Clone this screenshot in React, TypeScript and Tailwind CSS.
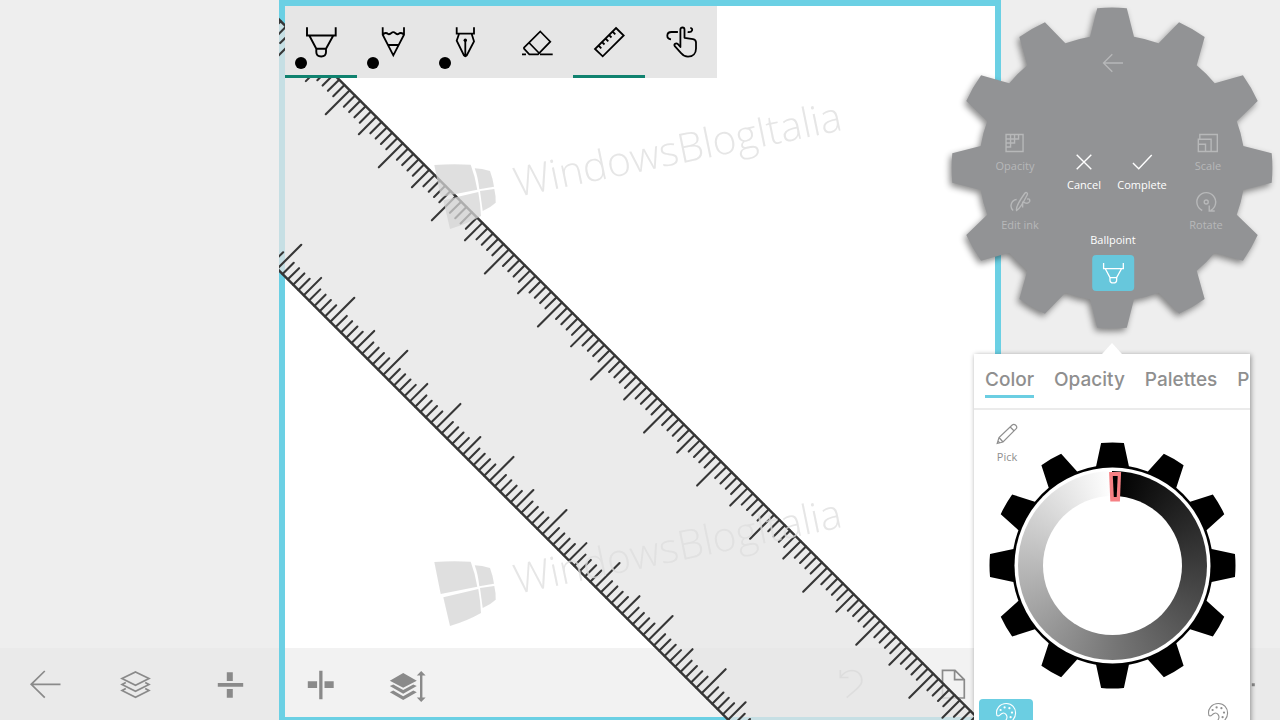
import React from 'react';

const TEETH = Array.from({ length: 12 }, (_, i) => i * 30);

// 12-tooth gear centred on 0,0
const gearPath = (outer: number, base: number, outerHalf: number, baseHalf: number) => {
  const point = (x: number, y: number, deg: number) => {
    const a = (deg * Math.PI) / 180;
    const px = x * Math.cos(a) - y * Math.sin(a);
    const py = x * Math.sin(a) + y * Math.cos(a);
    return `${px.toFixed(2)} ${py.toFixed(2)}`;
  };
  const oy = -Math.sqrt(outer * outer - outerHalf * outerHalf);
  const by = -Math.sqrt(base * base - baseHalf * baseHalf);
  const parts = TEETH.map((deg, i) => {
    const start = i === 0 ? `M${point(-baseHalf, by, deg)}` : `A${base} ${base} 0 0 1 ${point(-baseHalf, by, deg)}`;
    return `${start}L${point(-outerHalf, oy, deg)}A${outer} ${outer} 0 0 1 ${point(outerHalf, oy, deg)}L${point(baseHalf, by, deg)}`;
  });
  return `${parts.join('')}A${base} ${base} 0 0 1 ${point(-baseHalf, by, 0)}Z`;
};

const BallpointIcon = ({ className }: { className: string }) => (
  <svg viewBox="0 0 32 32" className={className} fill="none" stroke="currentColor" strokeWidth="1.9">
    <path d="M2 1.3V9.5H30.7V1.3M4.3 9.5L11.3 22.7H21L28.3 9.5M11.3 22.7V26C11.3 29 13.5 30.5 16.2 30.5S21 29 21 26V22.7" />
  </svg>
);

const PencilIcon = () => (
  <svg viewBox="0 0 32 32" className="size-8" fill="none" stroke="currentColor" strokeWidth="1.8">
    <path d="M5.7 1.3V8.7L16.3 29.3L27 8.7V1.3M5.7 8.7C7.5 6.5 9.5 6.5 11.3 8.2C13.5 8.7 14.3 6.2 16.3 6.2S19 8.7 21.2 8.2C23 6.5 25 6.5 27 8.7M11.3 19H21.3" />
  </svg>
);

const FountainPenIcon = () => (
  <svg viewBox="0 0 32 32" className="size-8" fill="none" stroke="currentColor" strokeWidth="1.8">
    <path d="M7.7 1.3V7.6H25V1.3M10 8L7.7 14.7L15 29.5Q16.3 31 17.7 29.5L25 15.3L22.7 8M16.3 15V30" />
    <circle cx="16.3" cy="14.3" r="1.7" fill="currentColor" stroke="none" />
  </svg>
);

const EraserIcon = () => (
  <svg viewBox="0 0 32 32" className="size-8" fill="none" stroke="currentColor" strokeWidth="1.7">
    <path d="M19.3 5.5L29.3 15.7L17 28.3H8.3L3 22.7V21.7ZM8.3 17L18 27M1 28.3H5M19 28.3H31.7" />
  </svg>
);

const RulerIcon = () => (
  <svg viewBox="0 0 32 32" className="size-8" fill="none" stroke="currentColor" strokeWidth="1.8">
    <path d="M23 2L30.7 9.5L9.7 30.3L2 23ZM5.5 19.5L8.3 22.3M9 16L11.5 18.5M12.5 12.5L15.3 15.3M16 9L18.5 11.5M19.5 5.5L22.3 8.3" />
  </svg>
);

const TouchIcon = () => (
  <svg viewBox="0 0 32 32" className="size-8" fill="none" stroke="currentColor" strokeWidth="1.8" strokeLinejoin="round">
    <path d="M15.4 21V3.5C15.4 .8 19.5 .8 19.5 3.5V11.8L28 13.2C30 13.6 31 14.5 31 16.5V22.5C31 27.5 28 30.7 23 30.7C20 30.7 18 29.5 16.3 27.3L9.8 20.2C8.5 18.2 11 16.4 12.8 18Z" />
    <path d="M12.9 6H6.5C1 6 1 12.8 6 13.3M22.7 6C27.7 6.8 28.5 2.2 25.3 1.8" />
  </svg>
);

const PaletteIcon = () => (
  <svg viewBox="0 0 20 20" className="size-5 overflow-visible" fill="none" stroke="currentColor" strokeWidth="1.1">
    <path d="M1 12.6C-1 6 4 .5 10.5 .5C16 .5 19.6 4.8 19.6 10C19.6 15.4 15.4 19.5 11.6 19.5C9.4 19.5 9.6 17.6 10.6 15.8C12 12.5 9 8.9 6 10.4C3.8 11.5 3.2 13.8 1 12.6Z" />
    <g fill="currentColor" stroke="none">
      <circle cx="4.6" cy="7" r="1.1" />
      <circle cx="8.6" cy="4.4" r="1.1" />
      <circle cx="13.4" cy="5.2" r="1.1" />
      <circle cx="16" cy="9.6" r="1.1" />
      <circle cx="14.6" cy="14.2" r="1.1" />
    </g>
  </svg>
);

const Watermark = ({ className }: { className: string }) => (
  <div className={`pointer-events-none absolute opacity-75 ${className}`}>
    <svg viewBox="0 0 420 76" className="h-[76px] w-[420px] overflow-visible">
      <g fill="#d5d5d5">
        <path d="M.3 2Q18 .6 36.7 1.7Q41 13 43.3 26.7L6.7 34Z" />
        <path d="M40.7 5.3Q48 5.6 56 8Q59 16 60 23.7L45.3 26.3Q44 14 40.7 5.3Z" />
        <path d="M46 28L60.3 26Q62 33 61.7 39.7Q56 45 48.7 48Z" />
        <path d="M9.3 37.3L44.3 29Q46.5 41 47 53Q33 61 16 66Z" />
      </g>
      <text x="83" y="34" transform="rotate(-11.6 83 34)" fill="#dedede" className="font-['Open_Sans',sans-serif] text-[41px] font-light">WindowsBlogItalia</text>
    </svg>
  </div>
);

// both scales repeat every ten marks: long, four short, middle, four short
const STEP = 10.61;
const tickLength = (i: number) => (i % 10 === 0 ? 24 : i % 5 === 0 ? 17.4 : 11.2);

const StencilRuler = () => (
  <svg className="pointer-events-none absolute inset-0 size-full" stroke="#363636" strokeWidth="2.1" strokeLinecap="round">
    <path d="M-40 -20.5L1000 1019.5L1000 1270.5L-40 230.5Z" fill="#e4e4e4" fillOpacity="0.75" stroke="none" />
    <path d="M-40 -20.5L1000 1019.5M-40 230.5L1000 1270.5" strokeWidth="2.4" />
    {Array.from({ length: 180 }, (_, n) => {
      const i = n - 50;
      const x = (440 - 279 - 19.5 + i * STEP) / 2;
      const y = x + 19.5;
      return <line key={i} x1={x} y1={y} x2={x - tickLength(Math.abs(i))} y2={y + tickLength(Math.abs(i))} />;
    })}
    {Array.from({ length: 180 }, (_, n) => {
      const i = n - 50;
      const x = (546 - 279 - 270.5 + i * STEP) / 2;
      const y = x + 270.5;
      return <line key={i} x1={x} y1={y} x2={x + tickLength(Math.abs(i))} y2={y - tickLength(Math.abs(i))} />;
    })}
  </svg>
);

const INK_TOOLS = [
  { name: 'Ballpoint pen', icon: <BallpointIcon className="size-8" />, dot: true, active: true },
  { name: 'Pencil', icon: <PencilIcon />, dot: true, active: false },
  { name: 'Calligraphy pen', icon: <FountainPenIcon />, dot: true, active: false },
  { name: 'Eraser', icon: <EraserIcon />, dot: false, active: false },
  { name: 'Ruler', icon: <RulerIcon />, dot: false, active: true },
  { name: 'Touch writing', icon: <TouchIcon />, dot: false, active: false },
];

const InkToolbar = () => (
  <div className="relative flex w-fit bg-[#e6e6e6] text-black">
    {INK_TOOLS.map(tool => (
      <button key={tool.name} aria-label={tool.name} className={`relative flex size-[72px] items-center justify-center border-y-[3px] border-t-transparent ${tool.active ? 'border-b-[#10826f]' : 'border-b-transparent'}`}>
        {tool.icon}
        {tool.dot && <span className="absolute bottom-1.5 left-2.5 size-3 rounded-full bg-black" />}
      </button>
    ))}
  </div>
);

const BarButton = ({ label, className = 'w-[91px]', children }: { label: string; className?: string; children: React.ReactNode }) => (
  <button aria-label={label} className={`flex h-full items-center justify-center ${className}`}>
    <svg viewBox="0 0 40 40" className="size-10 overflow-visible" fill="none" stroke="currentColor" strokeWidth="1.7">
      {children}
    </svg>
  </button>
);

const BottomBar = () => (
  <nav className="flex h-[72px] self-end bg-[#e6e6e6]/50 text-[#8a8a8a] [grid-area:1/1]">
    <BarButton label="Back">
      <path d="M18.8 7L5.2 20.3L18.8 33.7M5.2 20.3H34.5" />
    </BarButton>
    <BarButton label="Layers">
      <path d="M18.5 8L32 14.5L18.5 21.2L5 14.5ZM8.8 18.4L5 20.5L18.5 27.2L32 20.5L28.2 18.4M8.8 24.4L5 26.5L18.5 33.2L32 26.5L28.2 24.4" />
    </BarButton>
    <BarButton label="Mirror horizontally">
      <path fill="currentColor" stroke="none" d="M9.8 19h25.4v3.7H9.8zM18.8 8.3h6V17h-6zM18.8 25h6v8.7h-6z" />
    </BarButton>
    <BarButton label="Mirror vertically">
      <path fill="currentColor" stroke="none" d="M20.2 6.7h3.3v28.6h-3.3zM8.8 17.3h9.3V24H8.8zM25.5 17.3h9.2V24h-9.2z" />
    </BarButton>
    <BarButton label="Layer order">
      <g fill="currentColor" stroke="none">
        <path d="M13.2 9L26.8 16.7L13.2 23.7L-.2 16.7ZM-.2 22L3.3 20.6L13.2 26L23.3 20.6L26.8 22L13.2 29.7ZM-.2 28.2L3.3 26.6L13.2 32.2L23.3 26.6L26.8 28.2L13.2 36Z" />
        <path d="M31.2 7L35.6 11.5H32.4V33.5H35.6L31.2 38L26.8 33.5H30V11.5H26.8Z" />
      </g>
    </BarButton>
    <BarButton label="Undo" className="ml-auto w-[102px] text-[#c8c8c8]">
      <path d="M10.3 6V13.5H18.5M10.3 13.3C14 8.5 18 6.5 21.7 6.5C29 6.8 32.5 12 31.7 18C30.8 23 26 25 16.7 33.7" />
    </BarButton>
    <BarButton label="New page" className="mr-[197px] w-[102px]">
      <path d="M10.5 6.3H23L32.3 15.6V34H10.5ZM22.6 6.3V15.6H32.3" />
    </BarButton>
    <BarButton label="More" className="w-20">
      <path fill="currentColor" stroke="none" d="M31.8 19.2h3v3h-3zM22 19.2h3v3h-3zM12.2 19.2h3v3h-3z" />
    </BarButton>
  </nav>
);

const DialButton = ({ label, className, children }: { label: string; className: string; children: React.ReactNode }) => (
  <button className={`absolute flex -translate-x-1/2 flex-col items-center gap-[3px] text-[11px]/4 ${className}`}>
    <svg viewBox="0 0 24 24" className="size-6" fill="none" stroke="currentColor" strokeWidth="1.4">
      {children}
    </svg>
    {label}
  </button>
);

const ToolDial = () => (
  <div className="relative size-[320px] text-[#b7b8b9]">
    <svg viewBox="-160 -160 320 320" className="size-full overflow-visible drop-shadow-[-2px_3px_3px_rgba(0,0,0,0.45)]">
      <path d={gearPath(160.4, 133.2, 14.8, 22)} fill="#929395" />
    </svg>
    <button aria-label="Back" className="absolute left-[161px] top-[43px] -translate-x-1/2">
      <svg viewBox="0 0 24 24" className="size-6" fill="none" stroke="currentColor" strokeWidth="1.3">
        <path d="M11.3 3.2L2.5 12L11.3 20.8M2.5 12H22" />
      </svg>
    </button>
    <DialButton label="Opacity" className="left-[63px] top-[123px]">
      <path d="M3.5 3.5H20.5V20.5H3.5ZM8 3.5V16H3.5M3.5 8H16V3.5M12 3.5V12H3.5" />
    </DialButton>
    <DialButton label="Edit ink" className="left-[68px] top-[182px]">
      <path d="M8.5 20.5C7.5 18 9 14 16.5 3.5C18 1.5 20 3 19 5C15.5 12 12 18.5 8.5 20.5Z" />
      <path d="M8.5 9.5C3 10 1 17 5 20.5M14.5 17.5V12.5C15 10.5 19 16 21.5 11.5C22 9 20.5 8.5 18.8 9.2" />
    </DialButton>
    <DialButton label="Scale" className="left-64 top-[123px]">
      <path d="M4 8.3V3.5H21.5V20.5H15.3M2.5 8.3H15.3V20.5H2.5ZM2.5 13.3H9.7V20.5" />
    </DialButton>
    <DialButton label="Rotate" className="left-[254px] top-[182px]">
      <path d="M8 20.5A9.4 9.4 0 1 1 16.5 20.3M15 15.5V21H20.5" />
      <circle cx="12" cy="12" r="2" />
    </DialButton>
    <DialButton label="Cancel" className="left-[132px] top-[142px] text-white">
      <path d="M4.7 4.7L19.3 19.3M19.3 4.7L4.7 19.3" />
    </DialButton>
    <DialButton label="Complete" className="left-[190px] top-[142px] text-white">
      <path d="M2.7 13L8.5 18.7L21.5 5" />
    </DialButton>
    <button className="absolute left-[161px] top-56 flex -translate-x-1/2 flex-col items-center gap-[7px] text-[11px]/4 text-white">
      Ballpoint
      <span className="flex h-9 w-[42px] items-center justify-center rounded bg-[#67c7dc]">
        <BallpointIcon className="size-[22px]" />
      </span>
    </button>
  </div>
);

const TABS = ['Color', 'Opacity', 'Palettes', 'Perspective'];

const ColorPanel = () => (
  <section className="relative mt-[26px] w-[276px] bg-white text-[#8f8f8f] shadow-[1px_1px_5px_rgba(0,0,0,0.4)]">
    <svg viewBox="0 0 20 11" className="absolute -top-[11px] left-1/2 h-[11px] w-5 -translate-x-1/2">
      <path d="M10 0L20 11H0Z" fill="#ffffff" />
    </svg>
    <div className="flex h-14 items-start gap-5 overflow-hidden border-b-2 border-[#ebebeb] px-[11px] pt-3.5 font-[Inter,sans-serif] text-[19px]/6 font-medium">
      {TABS.map((tab, i) => (
        <button key={tab} className={`shrink-0 border-b-[3px] pb-[3px] ${i === 0 ? 'border-[#6bcee2]' : 'border-transparent'}`}>{tab}</button>
      ))}
    </div>
    <button className="absolute left-[21px] top-[68px] flex flex-col items-center gap-[3px] text-[11px]/4">
      <svg viewBox="0 0 24 24" className="size-6" fill="none" stroke="currentColor" strokeWidth="1.2">
        <path d="M2.2 21.5L4 15.5L17.2 3C19.5 1 23 4.5 21.2 6.7L8 20ZM4 15.5L8 20M15.2 5L19.2 9M3 19L4.7 20.8" />
      </svg>
      Pick
    </button>
    <div className="relative mx-auto mt-8 size-[247px]">
      <svg viewBox="-123.5 -123.5 247 247" className="size-full">
        <path d={gearPath(123, 100.5, 11.4, 16.4)} fill="#000000" />
        <circle r="98" fill="#ffffff" />
      </svg>
      <div className="absolute inset-[29px] rounded-full bg-[conic-gradient(#000,#3c3c3c_25%,#777_50%,#b9b9b9_75%,#fff)]" />
      <div className="absolute inset-[54px] rounded-full bg-white" />
      <svg viewBox="-123.5 -123.5 247 247" className="absolute inset-0 size-full">
        <path d="M-3.4 -93.5H8.6L7.4 -64H-2.2Z" fill="#f68084" />
        <path d="M.3 -89.5H5.2L4.2 -68.5H1.3Z" fill="#000000" />
      </svg>
    </div>
    <div className="mt-2.5 flex justify-between px-[5px] pb-2">
      <button aria-label="Color wheel" className="flex h-9 w-[54px] justify-center rounded bg-[#6bcee2] pt-1 text-white">
        <PaletteIcon />
      </button>
      <button aria-label="Swatches" className="flex h-9 w-[54px] justify-center pt-1">
        <PaletteIcon />
      </button>
    </div>
  </section>
);

export default function App() {
  return (
    <div className="relative grid h-screen overflow-hidden bg-[#eeeeee] font-['Open_Sans',sans-serif]">
      <div className="w-[722px] max-w-full justify-self-center bg-white [grid-area:1/1]" />
      <BottomBar />
      <main className="relative w-[722px] max-w-full justify-self-center overflow-hidden [grid-area:1/1]">
        <div className="absolute inset-0 border-[6px] border-b-[3px] border-[#6bd0e4]" />
        <StencilRuler />
        <Watermark className="left-[155px] top-[163px]" />
        <Watermark className="left-[155px] top-[560px]" />
        <div className="pl-1.5 pt-1.5">
          <InkToolbar />
        </div>
      </main>
      <aside className="absolute right-2 top-2 flex flex-col items-center">
        <ToolDial />
        <ColorPanel />
      </aside>
    </div>
  );
}
